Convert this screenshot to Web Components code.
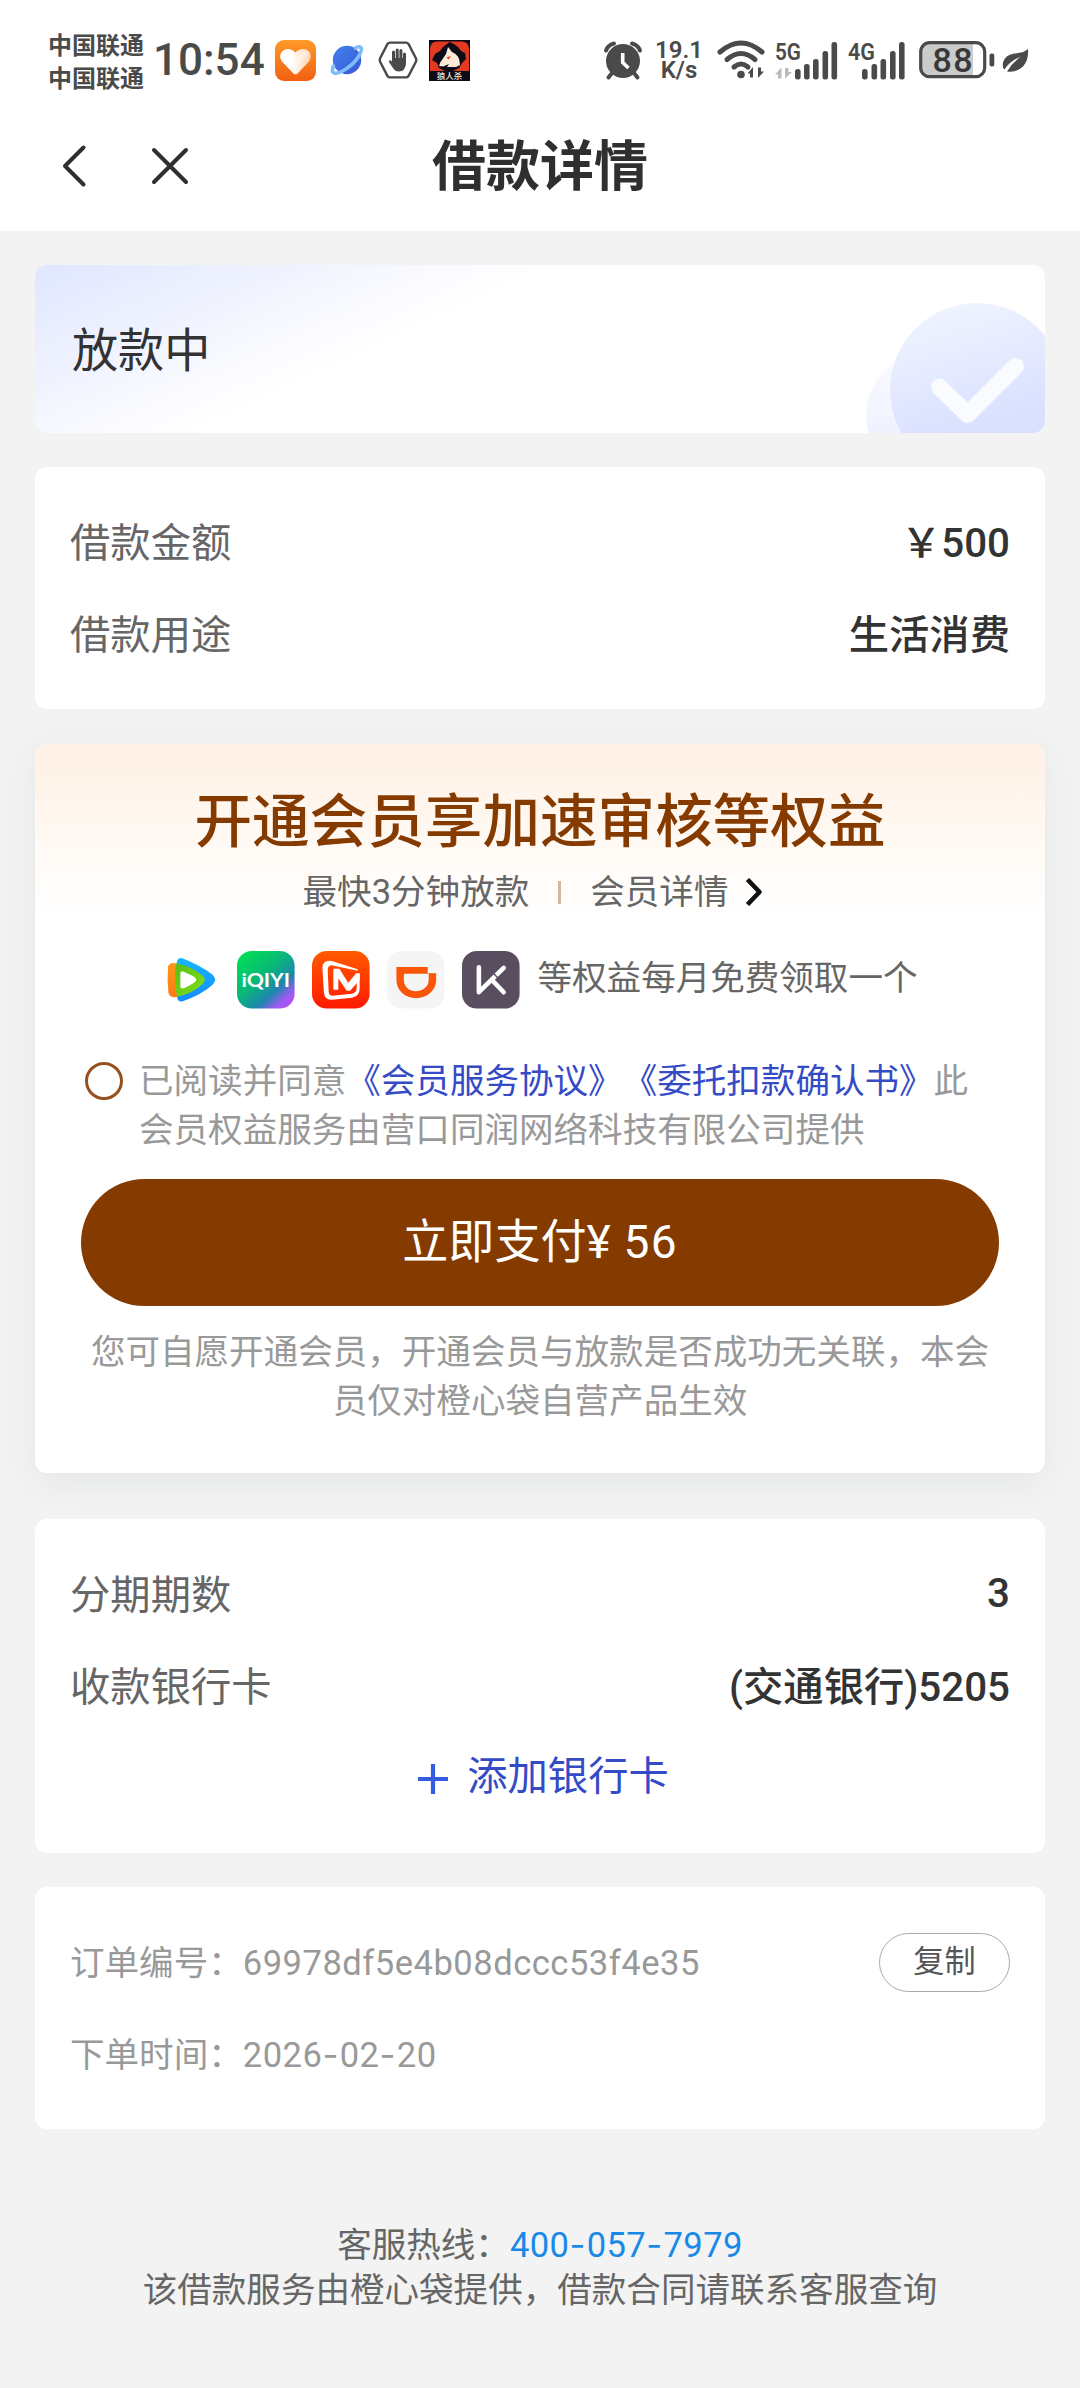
<!DOCTYPE html>
<html lang="zh-CN">
<head>
<meta charset="utf-8">
<title>借款详情</title>
<style>
  html, body { margin: 0; padding: 0; }
  body {
    width: 1080px; min-height: 2388px; background: #f3f3f3; color: #333;
    font-family: Roboto, "Noto Sans CJK SC", sans-serif;
    font-size: 34.56px; text-spacing-trim: space-all; overflow-x: hidden;
  }
</style>
</head>
<body>
<loan-page></loan-page>

<script>
const define = (name, html) => {
  const tpl = document.createElement('template');
  tpl.innerHTML = html.trim();
  customElements.define(name, class extends HTMLElement {
    constructor() {
      super();
      this.attachShadow({ mode: 'open' }).appendChild(tpl.content.cloneNode(true));
    }
  });
};

/* System status bar */
define('status-bar', `
<style>
  :host { display: flex; align-items: center; height: 120px; box-sizing: border-box; padding: 0 51px 0 48px; color: #4a4a4a; font-weight: 700; }
  svg { display: block; flex: none; overflow: visible; }
  .carrier { width: 97px; font-size: 24px; line-height: 33px; white-space: nowrap; margin-top: 5px; }
  .clock { font-size: 44px; line-height: 50px; width: 110px; margin-left: 8px; font-weight: 500; letter-spacing: 0; white-space: nowrap; }
  .apps { display: flex; align-items: center; margin-left: 12px; }
  .sys { display: flex; align-items: center; margin-left: auto; }
  .speed { display: grid; grid-template-rows: 20px 20px; width: 48px; margin-left: 13px; justify-items: center; font-size: 24px; line-height: 20px; font-weight: 600; white-space: nowrap; }
</style>
<div class="carrier"><div>中国联通</div><div>中国联通</div></div>
<div class="clock">10:54</div>
<div class="apps">
  <svg width="41" height="41" viewBox="0 0 41 41">
    <defs><linearGradient id="o" x1="0" y1="0" x2="0" y2="1"><stop offset="0" stop-color="#ff9a2b"/><stop offset="1" stop-color="#f2600f"/></linearGradient>
    <linearGradient id="w" x1="0" y1="0" x2="1" y2="0"><stop offset=".35" stop-color="#fff"/><stop offset="1" stop-color="#ffd3ac"/></linearGradient></defs>
    <rect width="41" height="41" rx="9" fill="url(#o)"/>
    <path d="M20.500 34.500 Q19 34.500 17 32 L7 21.500 Q4 17 6 13 Q9 8.500 14 9 Q18 9.500 20.500 12.500 Q23 9.500 27 9 Q32 8.500 35 13 Q37 17 34 21.500 L24 32 Q22 34.500 20.500 34.500Z" fill="url(#w)"/>
    <path d="M12 16 L20 24 L31 13" fill="none" stroke="#fff" stroke-width="6" stroke-linejoin="round" stroke-linecap="round" opacity=".35"/>
  </svg>
  <svg width="32" height="32" viewBox="0 0 32 32" style="margin-left:15px">
    <defs><linearGradient id="p" x1="0" y1="0" x2="1" y2="1"><stop offset="0" stop-color="#4381ee"/><stop offset="1" stop-color="#3a57d6"/></linearGradient></defs>
    <circle cx="16" cy="16" r="14.200" fill="url(#p)"/>
    <path d="M2.500 22 Q0 28 3 29 Q7 30 15 25 Q24 19 28.500 11 Q32 4 29 3 Q27.500 2.300 24.500 4" fill="none" stroke="#7ebcfa" stroke-width="3.600" stroke-linecap="round"/>
  </svg>
  <svg width="40" height="38" viewBox="0 0 40 38" style="margin-left:15px">
    <path d="M12 1.600 H28 Q29.500 1.600 30.500 3 L38 17.500 Q38.600 19 38 20.500 L30.500 35 Q29.500 36.400 28 36.400 H12 Q10.500 36.400 9.500 35 L2 20.500 Q1.400 19 2 17.500 L9.500 3 Q10.500 1.600 12 1.600Z" fill="none" stroke="#4a4a4a" stroke-width="2.400"/>
    <path d="M15.500 11 V22 M19.200 9 V22 M22.900 9.500 V22 M26.500 13 V22" stroke="#4a4a4a" stroke-width="3" stroke-linecap="round" fill="none"/>
    <path d="M14 17 H28 V23 Q27 30.500 21 30.500 Q17 30.500 15 27 L10.800 20.800 Q11 18.500 13 19.500 L14.500 21.500Z" fill="#4a4a4a"/>
  </svg>
  <svg width="41" height="41" viewBox="0 0 41 41" style="margin-left:11px">
    <rect width="41" height="41" fill="#0d0b18"/><path d="M1 8 Q2 1.500 8 1.500 H33 Q39 1.500 40 8 V31 H1Z" fill="#e2391f"/>
    <path d="M20.500 2 L25 4 L29 7 L32 11 L36 13 L37 19 L33 23 L30 28 L24 31 H16 L10 28 L8 23 L3 20 L6 14 L11 11 L14 7Z" fill="#0d0b18"/>
    <path d="M19 7 L23 12 Q31 15 31 25 L27 27 H18 L20 24 L14 26.500 L10 26 L11.500 22 L17 14Z" fill="#fdebd5"/>
    <path d="M17.500 17.500 L22 16 L19.500 19.500Z" fill="#e2391f"/>
    <text x="20.500" y="39.300" font-size="8.500" font-weight="500" text-anchor="middle" fill="#f6e4d6" font-family="Noto Sans CJK SC">狼人杀</text>
  </svg>
</div>
<div class="sys">
  <svg width="38" height="39" viewBox="0 0 38 39">
    <g fill="none" stroke="#4a4a4a" stroke-linecap="round"><path d="M2 9.500 Q4 4 10 2.500 M36 9.500 Q34 4 28 2.500" stroke-width="4"/><path d="M8 32 L4.500 36.500 M30 32 L33.500 36.500" stroke-width="4"/></g>
    <circle cx="19" cy="20" r="17" fill="#4a4a4a"/><path d="M18.700 12 V21.500 L24.500 27" fill="none" stroke="#fff" stroke-width="3.600"/>
  </svg>
  <div class="speed"><span>19.1</span><span>K/s</span></div>
  <svg width="50" height="40" viewBox="0 0 50 40" style="margin-left:14px">
    <g fill="none" stroke="#4a4a4a" stroke-width="5" stroke-linecap="round"><path d="M3 12 Q24 -6 45 12"/><path d="M10 19.500 Q24 7.500 38 19.500"/><path d="M17 27 Q24 21 31 27"/></g>
    <circle cx="24" cy="34.500" r="3.800" fill="#4a4a4a"/>
    <path d="M36 37.500 V27 L30.500 33.500 H33 V37.500Z M41 27.500 V38 L47 31.500 H44 V27.500Z" fill="#4a4a4a"/>
  </svg>
  <svg width="63" height="40" viewBox="0 0 63 40" style="margin-left:8px">
    <text x="0" y="19.500" font-size="24" font-weight="600" textLength="26" lengthAdjust="spacingAndGlyphs" font-family="Roboto" fill="#4a4a4a">5G</text>
    <path d="M6.500 38.500 V27.500 L0 34.500 H3 V38.500Z M10 28 V38.500 L17 32 H13.500 V28Z" fill="#bbb"/>
    <g fill="#4a4a4a"><rect x="20" y="29" width="5.600" height="10.500" rx="2.500"/><rect x="29" y="24" width="5.600" height="15.500" rx="2.500"/><rect x="38" y="19" width="5.600" height="20.500" rx="2.500"/><rect x="47.500" y="11" width="5.600" height="28.500" rx="2.500"/><rect x="56.500" y="2" width="5.600" height="37.500" rx="2.500"/></g>
  </svg>
  <svg width="58" height="40" viewBox="0 0 58 40" style="margin-left:10px">
    <text x="0" y="19.500" font-size="24" font-weight="600" textLength="27" lengthAdjust="spacingAndGlyphs" font-family="Roboto" fill="#4a4a4a">4G</text>
    <g fill="#4a4a4a"><rect x="14" y="29" width="5.600" height="10.500" rx="2.500"/><rect x="23.500" y="24" width="5.600" height="15.500" rx="2.500"/><rect x="32.500" y="19" width="5.600" height="20.500" rx="2.500"/><rect x="42" y="11" width="5.600" height="28.500" rx="2.500"/><rect x="51" y="2" width="5.600" height="37.500" rx="2.500"/></g>
  </svg>
  <svg width="76" height="38" viewBox="0 0 76 38" style="margin-left:13px">
    <path d="M10 2 H54 V36 H10 Q2 36 2 28 V10 Q2 2 10 2Z" fill="#cbcbcb"/>
    <rect x="1.700" y="1.700" width="64" height="34" rx="9" fill="none" stroke="#4a4a4a" stroke-width="3.200"/>
    <rect x="70.500" y="12.500" width="4.800" height="13" rx="2" fill="#4a4a4a"/>
    <text x="33.500" y="30.800" font-size="34" font-weight="500" textLength="40" text-anchor="middle" font-family="Roboto" fill="#383838">88</text>
  </svg>
  <svg width="27" height="25" viewBox="0 0 27 25" style="margin-left:7px">
    <path d="M26 1 Q27 12 21 18.500 Q14 25 5 23.500 Q10 15 19 8.500 Q8 13 2.500 21.500 Q0 20 1 14.500 Q3 7 12 5.500 Q22 5 26 1Z" fill="#4a4a4a"/>
  </svg>
</div>`);

/* Page navigation bar */
define('nav-bar', `
<style>
  :host { display: grid; grid-template-columns: 1fr auto 1fr; align-items: center; height: 92px; margin-bottom: 19px; padding-left: 60px; padding-right: 60px; }
  .tools { display: flex; align-items: center; gap: 64px; }
  h1 { margin: 4px 0 0; font-size: 54px; line-height: 60px; font-weight: 700; color: #2f2f2f; }
  svg { display: block; }
</style>
<div class="tools">
  <svg width="27" height="44" viewBox="0 0 27 44"><path d="M23.500 3.500 L5 22 L23.500 40.500" fill="none" stroke="#2f2f2f" stroke-width="4" stroke-linecap="round" stroke-linejoin="round"/></svg>
  <svg width="38" height="38" viewBox="0 0 38 38"><path d="M3 3 L35 35 M35 3 L3 35" fill="none" stroke="#2f2f2f" stroke-width="4" stroke-linecap="round"/></svg>
</div>
<h1><slot></slot></h1>`);

/* White rounded container */
define('info-card', `
<style>
  :host { display: block; box-sizing: border-box; background: #fff; border-radius: 12px; padding: 29px 35px; }
</style><slot></slot>`);

define('info-row', `
<style>
  :host { display: flex; align-items: center; justify-content: space-between; height: 92px; font-size: 40.32px; line-height: 56px; color: #666; white-space: nowrap; }
  span { padding-top: 4px; }
  .value { color: #333; font-weight: 500; padding-top: var(--value-drop, 3px); }
</style>
<span><slot name="label"></slot></span><span class="value"><slot></slot></span>`);

define('meta-row', `
<style>
  :host { display: flex; align-items: center; justify-content: space-between; height: 92px; font-size: 34.56px; line-height: 48px; color: #999; white-space: nowrap; }
  .t { padding-top: 2px; }
  .v { letter-spacing: .5px; }
</style>
<span class="t"><slot name="label"></slot><span class="v"><slot></slot></span></span><slot name="action"></slot>`);

define('pill-button', `
<style>
  :host { display: flex; align-items: center; justify-content: center; box-sizing: border-box; width: 131px; height: 59px; border: 1.500px solid #aaa; border-radius: 30px; font-size: 31.200px; line-height: 40px; color: #555; padding-bottom: 1px; }
</style><slot></slot>`);

/* Loan state banner */
define('state-banner', `
<style>
  :host { display: flex; align-items: center; justify-content: space-between; height: 168px; border-radius: 12px; overflow: hidden; padding-left: 37px;
    background: linear-gradient(155deg, #dfe6ff 0%, #edf1ff 16%, #f9faff 29%, #fff 38%); color: #333; font-size: 46.080px; line-height: 60px; }
  svg { display: block; }
  span { padding-top: 4px; }
</style>
<span><slot></slot></span>
<svg width="185" height="168" viewBox="0 0 185 168">
  <defs>
    <linearGradient id="a" x1=".3" y1="0" x2=".6" y2="1"><stop offset="0" stop-color="#f0f4ff"/><stop offset=".7" stop-color="#dae1ff"/><stop offset="1" stop-color="#d6deff"/></linearGradient>
    <linearGradient id="b" x1="0" y1="0" x2="0" y2="1"><stop offset="0" stop-color="#fbfcff"/><stop offset="1" stop-color="#e9edff"/></linearGradient>
  </defs>
  <circle cx="68" cy="150" r="62" fill="url(#b)"/>
  <circle cx="117" cy="125" r="87" fill="url(#a)"/>
  <path d="M79.500 122 L107.500 149.500 L155.500 101.500" fill="none" stroke="#f9fbff" stroke-width="17" stroke-linecap="round" stroke-linejoin="round"/>
</svg>`);

/* Strip of partner app logos */
define('brand-icons', `
<style>
  :host { display: flex; gap: 17.280px; }
  svg { display: block; width: 57.600px; height: 57.600px; flex: none; }
</style>
<svg viewBox="0 0 58 58">
  <defs>
    <linearGradient id="t1" x1="0" y1="0" x2="0" y2="1"><stop offset="0" stop-color="#16b5ff"/><stop offset="1" stop-color="#168cff"/></linearGradient>
    <linearGradient id="t2" x1="0" y1="0" x2="0" y2="1"><stop offset="0" stop-color="#ff9a1a"/><stop offset="1" stop-color="#ff7a12"/></linearGradient>
    <linearGradient id="t3" x1="0" y1="0" x2="1" y2="1"><stop offset="0" stop-color="#57bd16"/><stop offset="1" stop-color="#86df16"/></linearGradient>
  </defs>
  <path d="M15 11 Q16 6 21 7.500 Q40 15 51 24 Q56 29 51 34 Q40 44 21 50.500 Q16 52 15 46 Q12 29 15 11Z" fill="url(#t1)"/>
  <path d="M6 17 Q6 12 12 12 L17 13 L16 46 Q8 48 6.500 42 Q5 30 6 17Z" fill="url(#t2)"/>
  <path d="M14 12.500 Q30 15 41 25 Q45 29 41 33 Q31 43 15 46 Q12 29 14 12.500Z" fill="url(#t3)"/>
  <path d="M18.500 22 Q19 19.500 22 21 Q31 25 34 27.500 Q35 29 34 30.500 Q30 34 22 37.500 Q19 38.500 18.500 36Z" fill="#fff"/>
</svg>
<svg viewBox="0 0 58 58">
  <defs><linearGradient id="q" x1="0.100" y1="0" x2="1" y2="1"><stop offset="0" stop-color="#00e052"/><stop offset=".4" stop-color="#09b878"/><stop offset=".66" stop-color="#1c86ae"/><stop offset=".82" stop-color="#9a5cf0"/><stop offset="1" stop-color="#c944ff"/></linearGradient></defs>
  <rect width="58" height="58" rx="15" fill="url(#q)"/>
  <text x="29" y="36.500" font-family="Lato" font-weight="700" font-size="20" text-anchor="middle" textLength="49" lengthAdjust="spacingAndGlyphs" fill="#fff">iQIYI</text>
</svg>
<svg viewBox="0 0 58 58">
  <defs><linearGradient id="m" x1="0" y1="0" x2="0" y2="1"><stop offset="0" stop-color="#ff5a00"/><stop offset="1" stop-color="#ff1a00"/></linearGradient></defs>
  <rect width="58" height="58" rx="15" fill="url(#m)"/>
  <path d="M46 18.500 L20 10 Q10.500 9 10.500 17 L12 42 Q13 49.500 20 49 L40 47 Q48 45.500 48 38 V22.500 L45 25 V37 Q45 42 40 43 L21 45 Q17 45 16.800 41 L15.800 19 Q16 14 21 14.500 L46 20Z" fill="#fff"/>
  <path d="M21.500 39 V18 H27.500 L36.500 32 L44.500 22.500 H48 V29 L38.500 40 H35 L26.500 27.500 V39Z" fill="#fff"/>
</svg>
<svg viewBox="0 0 58 58">
  <rect width="58" height="58" rx="15" fill="#f5f5f5"/>
  <path d="M9.500 16 H41 V22.500 H49.500 V29 C49.500 40 40 47.500 29.500 47.500 C18 47.500 9.500 40 9.500 29Z M17 23 V29 C17 36 22 40.500 29 40.500 C36 40.500 42 36 42 29 V23Z" fill="#f9560a" fill-rule="evenodd"/>
</svg>
<svg viewBox="0 0 58 58">
  <rect width="58" height="58" rx="15" fill="#594d60"/>
  <path d="M17 16.500 V41.500 L42 17 M30 29 L42 41.500" fill="none" stroke="#fff" stroke-width="4.600" stroke-linecap="round" stroke-linejoin="round"/>
  <path d="M31.500 22.500 L37 28" stroke="#594d60" stroke-width="1.500"/>
</svg>`);

/* Membership promotion */
define('member-card', `
<style>
  :host { display: flex; flex-direction: column; align-items: center; box-sizing: border-box; height: 729px; border-radius: 12px; padding: 41px 46px 0;
    background: linear-gradient(180deg, #fff1e6 0, #fff4ea 40px, #fffaf5 105px, #fff 175px, #fff 100%); box-shadow: 0 10px 42px rgba(40, 70, 80, .075); color: #666; }
  h2 { margin: 0; height: 76px; line-height: 76px; font-size: 57.600px; font-weight: 500; color: #853b00; white-space: nowrap; }
  .sub { display: flex; align-items: center; height: 48px; line-height: 48px; margin-top: 7px; margin-left: -13px; white-space: nowrap; }
  .bar { width: 3px; height: 23px; background: #d8b69c; margin: 0 29px 0 29px; }
  .sub svg { margin-left: 16px; }
  .perks { display: flex; align-items: center; gap: 18px; height: 58px; margin-top: 35px; white-space: nowrap; line-height: 52px; }
  .perks span { padding-bottom: 4px; }
  .agree { display: flex; align-self: stretch; margin-top: 48px; padding-left: 4px; gap: 16px; line-height: 49px; color: #999; }
  .ring { width: 38px; height: 38px; box-sizing: border-box; border: 3.500px solid #96501f; border-radius: 50%; flex: none; margin-top: 5px; }
  .agree p { margin: 0; white-space: nowrap; }
  a { color: #354bc6; }
  button { all: unset; display: block; box-sizing: border-box; width: 918px; height: 127px; margin-top: 24px; border-radius: 64px; background: #853b00; color: #fff; font-size: 46.080px; line-height: 121px; text-align: center; white-space: pre; }
  button span { letter-spacing: 1.200px; word-spacing: -1px; }
  .note { margin: 22px 0 0; line-height: 49px; text-align: center; color: #999; white-space: nowrap; }
</style>
<h2>开通会员享加速审核等权益</h2>
<div class="sub"><span>最快3分钟放款</span><i class="bar"></i><span>会员详情</span>
  <svg width="20" height="32" viewBox="0 0 20 32"><path d="M3.500 3.500 L15.500 16 L3.500 28.500" fill="none" stroke="#111" stroke-width="4.600" stroke-linejoin="round"/></svg></div>
<div class="perks"><brand-icons></brand-icons><span>等权益每月免费领取一个</span></div>
<div class="agree"><i class="ring"></i><p>已阅读并同意<a>《会员服务协议》</a><a>《委托扣款确认书》</a>此<br>会员权益服务由营口同润网络科技有限公司提供</p></div>
<button>立即支付<span>¥ 56</span></button>
<p class="note">您可自愿开通会员，开通会员与放款是否成功无关联，本会<br>员仅对橙心袋自营产品生效</p>`);

define('add-card', `
<style>
  :host { display: flex; align-items: center; justify-content: center; gap: 18px; height: 92px; font-size: 40.320px; line-height: 56px; color: #354bc6; padding-left: 6px; }
  svg { display: block; margin-top: 2px; }
  span { margin-top: -2px; }
</style>
<svg width="32" height="32" viewBox="0 0 32 32"><path d="M16 1 V31 M1 16 H31" stroke="#345be0" stroke-width="4.200"/></svg><span><slot></slot></span>`);

/* Wide dash used between groups of digits */
define('digit-dash', `<style>:host { display: inline; font-family: Inter, sans-serif; letter-spacing: 1.400px; }</style><slot></slot>`);

define('page-footer', `
<style>
  :host { display: block; text-align: center; color: #666; line-height: 45px; padding-top: 93px; white-space: nowrap; }
  a { color: #1989e8; letter-spacing: .42px; }
</style>
<div>客服热线：<a>400<digit-dash>-</digit-dash>057<digit-dash>-</digit-dash>7979</a></div>
<div>该借款服务由橙心袋提供，借款合同请联系客服查询</div>`);

define('loan-page', `
<style>
  :host { display: block; }
  header { background: #fff; height: 231px; }
  main { display: flex; flex-direction: column; padding: 34px 35px 0; }
  .c1 { margin-top: 34px; } .c2 { margin-top: 35px; } .c3 { margin-top: 46px; } .c4 { margin-top: 34px; }
  .periods { --value-drop: 0px; }
</style>
<header><status-bar></status-bar><nav-bar>借款详情</nav-bar></header>
<main>
  <state-banner>放款中</state-banner>
  <info-card class="c1">
    <info-row><span slot="label">借款金额</span>￥500</info-row>
    <info-row><span slot="label">借款用途</span>生活消费</info-row>
  </info-card>
  <member-card class="c2"></member-card>
  <info-card class="c3">
    <info-row class="periods"><span slot="label">分期期数</span>3</info-row>
    <info-row><span slot="label">收款银行卡</span>(交通银行)5205</info-row>
    <add-card>添加银行卡</add-card>
  </info-card>
  <info-card class="c4">
    <meta-row><span slot="label">订单编号：</span>69978df5e4b08dccc53f4e35<pill-button slot="action">复制</pill-button></meta-row>
    <meta-row><span slot="label">下单时间：</span>2026<digit-dash>-</digit-dash>02<digit-dash>-</digit-dash>20</meta-row>
  </info-card>
  <page-footer></page-footer>
</main>`);
</script>
</body>
</html>
